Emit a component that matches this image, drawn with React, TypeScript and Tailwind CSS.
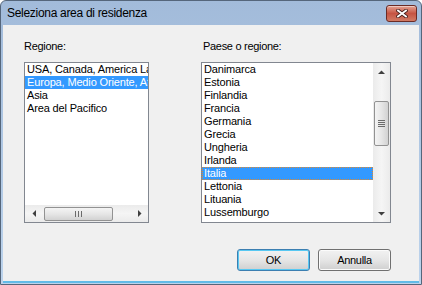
import React from "react";

const regions = ["USA, Canada, America Latina e Caraibi", "Europa, Medio Oriente, Africa", "Asia", "Area del Pacifico"];

const countries = [
  "Danimarca",
  "Estonia",
  "Finlandia",
  "Francia",
  "Germania",
  "Grecia",
  "Ungheria",
  "Irlanda",
  "Italia",
  "Lettonia",
  "Lituania",
  "Lussemburgo",
];

function Arrow({ dir }: { dir: "up" | "down" | "left" | "right" }) {
  const vertical = dir === "up" || dir === "down";
  const pts = {
    up: "0,4 3.5,0.5 7,4",
    down: "0,0 3.5,3.5 7,0",
    left: "4,0 0.5,3.5 4,7",
    right: "0,0 3.5,3.5 0,7",
  }[dir];
  return (
    <svg width={vertical ? 7 : 4} height={vertical ? 4 : 7} viewBox={vertical ? "0 0 7 4" : "0 0 4 7"}>
      <polygon points={pts} fill="#404040" />
    </svg>
  );
}

function CloseButton() {
  return (
    <div className="flex h-[17px] w-[31px] items-center justify-center rounded-[3px] border border-[#6b2b25] bg-gradient-to-b from-[#e3a293] via-[#c65443] to-[#d17a64] shadow-[inset_0_1px_0_rgba(255,255,255,0.45)]">
      <svg width="12" height="9" viewBox="0 0 12 9">
        <g strokeLinecap="square">
          <path d="M2 1.5 L10 7.5 M10 1.5 L2 7.5" stroke="#4a201c" strokeWidth="3.6" />
          <path d="M2 1.5 L10 7.5 M10 1.5 L2 7.5" stroke="#ffffff" strokeWidth="1.8" />
        </g>
      </svg>
    </div>
  );
}

function Row({ label, selected, focused }: { label: string; selected?: boolean; focused?: boolean }) {
  return (
    <div
      className={
        "h-[13px] whitespace-nowrap pl-[2px] leading-[13px] tracking-[-0.15px] " +
        (selected ? "bg-[#3399ff] text-white " : "text-black ") +
        (focused ? "outline outline-1 -outline-offset-1 outline-dotted outline-[#e0892e]" : "")
      }
    >
      {label}
    </div>
  );
}

export default function App() {
  return (
    <div className="flex h-[285px] w-[422px] flex-col overflow-hidden rounded-t-[6px] border border-[#55667b] bg-gradient-to-b from-[#a2bbda] to-[#bcd3ec] font-['Liberation_Sans',Arial,sans-serif] text-[11px] tracking-[-0.3px] text-black">
      {/* Title bar */}
      <div className="flex h-[24px] shrink-0 items-center justify-between pl-[6px] pr-[4px]">
        <span className="text-[12px] leading-[16px] tracking-[-0.3px] text-black">Seleziona area di residenza</span>
        <CloseButton />
      </div>

      {/* Client area */}
      <div className="mx-[2px] mb-[1px] flex flex-1 flex-col border-b-2 border-[#62bbe8] bg-[#f0f0f0] pl-[21px] pr-[28px] pt-[15px]">
        <div className="flex gap-[52px]">
          {/* Regione */}
          <div className="w-[125px]">
            <div className="mb-[9px] h-[13px] leading-[13px]">Regione:</div>
            <div className="flex h-[161px] flex-col border border-[#828790] bg-white">
              <div className="flex-1 overflow-hidden">
                {regions.map((r, i) => (
                  <Row key={r} label={r} selected={i === 1} />
                ))}
              </div>
              <div className="flex h-[17px] items-center bg-gradient-to-b from-[#ebebeb] via-[#f5f5f5] to-[#ebebeb]">
                <div className="flex h-[17px] w-[17px] items-center justify-center">
                  <Arrow dir="left" />
                </div>
                <div className="flex-1">
                  <div className="ml-[2px] flex h-[14px] w-[69px] items-center justify-center rounded-[2px] border border-[#929292] bg-gradient-to-b from-[#f4f4f4] via-[#e6e6e6] to-[#d2d2d2]">
                    <div className="flex gap-[2px]">
                      <div className="h-[6px] w-[1px] bg-[#6b6b6b]" />
                      <div className="h-[6px] w-[1px] bg-[#6b6b6b]" />
                      <div className="h-[6px] w-[1px] bg-[#6b6b6b]" />
                    </div>
                  </div>
                </div>
                <div className="flex h-[17px] w-[17px] items-center justify-center">
                  <Arrow dir="right" />
                </div>
              </div>
            </div>
          </div>

          {/* Paese o regione */}
          <div className="w-[190px]">
            <div className="mb-[9px] ml-[2px] h-[13px] leading-[13px]">Paese o regione:</div>
            <div className="flex h-[161px] border border-[#828790] bg-white">
              <div className="flex-1 overflow-hidden">
                {countries.map((c) => (
                  <Row key={c} label={c} selected={c === "Italia"} focused={c === "Italia"} />
                ))}
              </div>
              <div className="flex w-[17px] flex-col items-center bg-gradient-to-r from-[#ebebeb] via-[#f5f5f5] to-[#ebebeb]">
                <div className="flex h-[17px] w-[17px] items-center justify-center">
                  <Arrow dir="up" />
                </div>
                <div className="flex-1 pt-[21px]">
                  <div className="flex h-[45px] w-[15px] items-center justify-center rounded-[2px] border border-[#929292] bg-gradient-to-r from-[#f4f4f4] via-[#e6e6e6] to-[#d2d2d2]">
                    <div className="flex flex-col gap-[1px]">
                      <div className="h-[1px] w-[7px] bg-[#6b6b6b]" />
                      <div className="h-[1px] w-[7px] bg-[#6b6b6b]" />
                      <div className="h-[1px] w-[7px] bg-[#6b6b6b]" />
                      <div className="h-[1px] w-[7px] bg-[#6b6b6b]" />
                    </div>
                  </div>
                </div>
                <div className="flex h-[17px] w-[17px] items-center justify-center">
                  <Arrow dir="down" />
                </div>
              </div>
            </div>
          </div>
        </div>

        {/* Buttons */}
        <div className="mt-[26px] flex justify-end gap-[8px]">
          <button className="h-[22px] w-[73px] rounded-[3px] border border-[#3c7fb1] bg-gradient-to-b from-[#f2f2f2] via-[#e6e6e6] to-[#cfcfcf] leading-[18px] text-black shadow-[inset_0_0_0_1px_#58c8f2]">
            OK
          </button>
          <button className="h-[22px] w-[73px] rounded-[3px] border border-[#707070] bg-gradient-to-b from-[#f2f2f2] via-[#e6e6e6] to-[#cfcfcf] leading-[18px] text-black shadow-[inset_0_0_0_1px_#fbfbfb]">
            Annulla
          </button>
        </div>
      </div>
    </div>
  );
}
